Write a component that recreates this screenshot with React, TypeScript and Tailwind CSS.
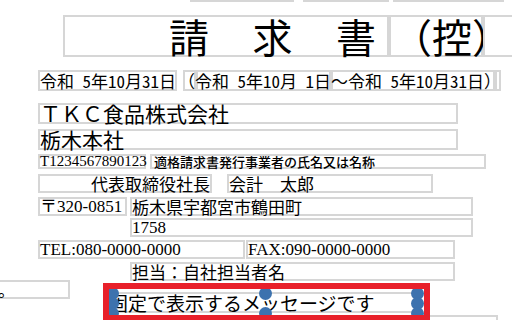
const gothic = "font-['Noto_Sans_CJK_JP',sans-serif]";
const mono = "font-['Noto_Sans_Mono_CJK_JP','Noto_Sans_CJK_JP',sans-serif]";
const serif = "font-['Liberation_Serif','Noto_Sans_CJK_JP',serif]";

const frame = "absolute box-border border-2 border-[#d6d6d6]";
const field = "absolute box-border border-2 border-[#d6d6d6] flex items-center whitespace-nowrap leading-none text-black";

function Handle({ className }: { className: string }) {
  return <div className={`absolute h-[13px] w-[13px] rounded-full bg-[#3d72ae] ${className}`} />;
}

export default function App() {
  return (
    <div className="relative h-[320px] w-[512px] overflow-hidden bg-white text-black">
      {/* previous band, only its bottom edge is visible */}
      <div className={`${frame} left-[190px] top-[-20px] h-[22px] w-[104px]`} />
      <div className={`${frame} left-[303px] top-[-20px] h-[22px] w-[86px]`} />
      <div className={`${frame} left-[393px] top-[-20px] h-[22px] w-[73px]`} />
      <div className={`${frame} left-[466px] top-[-20px] h-[22px] w-[38px]`} />

      {/* title */}
      <div className={`${field} ${gothic} left-[63px] top-[15px] h-[42px] w-[326px] gap-[43.5px] pl-[104px] text-[40px]`}>
        <span>請</span>
        <span>求</span>
        <span>書</span>
      </div>
      <div className={`${field} ${gothic} left-[389px] top-[15px] h-[42px] w-[94px] pl-[1px] text-[40px]`}>
        （控）
      </div>
      <div className={`${frame} left-[483px] top-[15px] h-[42px] w-[60px]`} />

      {/* period */}
      <div className={`${field} ${mono} left-[38px] top-[70px] h-[21px] w-[139px] text-[17px]`}>
        令和 5年10月31日
      </div>
      <div className={`${frame} left-[183px] top-[70px] h-[21px] w-[13px]`} />
      <div className={`${frame} left-[196px] top-[70px] h-[21px] w-[135px]`} />
      <div className={`${frame} left-[331px] top-[70px] h-[21px] w-[164px]`} />
      <div className={`${frame} left-[495px] top-[70px] h-[21px] w-[6px]`} />
      <span className={`absolute left-[178px] top-[70px] flex h-[21px] items-center whitespace-nowrap text-[17px] leading-none ${mono}`}>
        （令和 5年10月 1日～令和 5年10月31日）
      </span>

      {/* issuer */}
      <div className={`${field} ${gothic} left-[38px] top-[103px] h-[21px] w-[420px] text-[21px]`}>
        ＴＫＣ食品株式会社
      </div>
      <div className={`${field} ${gothic} left-[38px] top-[129px] h-[21px] w-[420px] text-[21px]`}>
        栃木本社
      </div>
      <div className={`${field} ${serif} left-[38px] top-[154px] h-[15px] w-[108px] text-[15px]`}>
        T1234567890123
      </div>
      <div className={`${field} ${gothic} left-[150px] top-[154px] h-[15px] w-[336px] pl-[2px] text-[13px] font-medium`}>
        適格請求書発行事業者の氏名又は名称
      </div>
      <div className={`${field} ${gothic} left-[38px] top-[174px] h-[19px] w-[174px] justify-end text-[17px]`}>
        代表取締役社長
      </div>
      <div className={`${field} ${gothic} left-[227px] top-[174px] h-[19px] w-[206px] text-[17px]`}>
        会計　太郎
      </div>
      <div className={`${field} ${serif} left-[38px] top-[197px] h-[19px] w-[89px] text-[17px]`}>
        〒320-0851
      </div>
      <div className={`${field} ${gothic} left-[130px] top-[197px] h-[19px] w-[343px] text-[17px]`}>
        栃木県宇都宮市鶴田町
      </div>
      <div className={`${field} ${serif} left-[130px] top-[218px] h-[19px] w-[343px] text-[17px]`}>
        1758
      </div>
      <div className={`${field} ${serif} left-[38px] top-[240px] h-[19px] w-[207px] text-[17px]`}>
        TEL:080-0000-0000
      </div>
      <div className={`${field} ${serif} left-[246px] top-[240px] h-[19px] w-[209px] text-[17px]`}>
        FAX:090-0000-0000
      </div>
      <div className={`${field} ${gothic} left-[130px] top-[262px] h-[19px] w-[325px] text-[17px]`}>
        担当：自社担当者名
      </div>

      {/* neighbouring elements */}
      <div className={`${field} ${gothic} left-[-10px] top-[280px] h-[19px] w-[80px] pl-[6px] text-[17px]`}>
        。
      </div>
      <div className={`${frame} left-[380px] top-[315px] h-[30px] w-[118px]`} />

      {/* selected element */}
      <div className={`${frame} left-[113px] top-[292px] h-[21px] w-[305px] border-[#d0d0d0]`} />
      <span className={`absolute left-[109px] top-[292px] flex h-[21px] items-center whitespace-nowrap text-[19px] leading-none ${gothic}`}>
        固定で表示するメッセージです
      </span>
      <Handle className="left-[106px] top-[287px]" />
      <Handle className="left-[259px] top-[287px]" />
      <Handle className="left-[411px] top-[287px]" />
      <Handle className="left-[106px] top-[297px]" />
      <Handle className="left-[411px] top-[297px]" />
      <Handle className="left-[106px] top-[307px]" />
      <Handle className="left-[259px] top-[307px]" />
      <Handle className="left-[411px] top-[307px]" />
      <div className="pointer-events-none absolute left-[103px] top-[283px] box-border h-[38px] w-[327px] border-[6px] border-[#e8202a]" />
    </div>
  );
}
